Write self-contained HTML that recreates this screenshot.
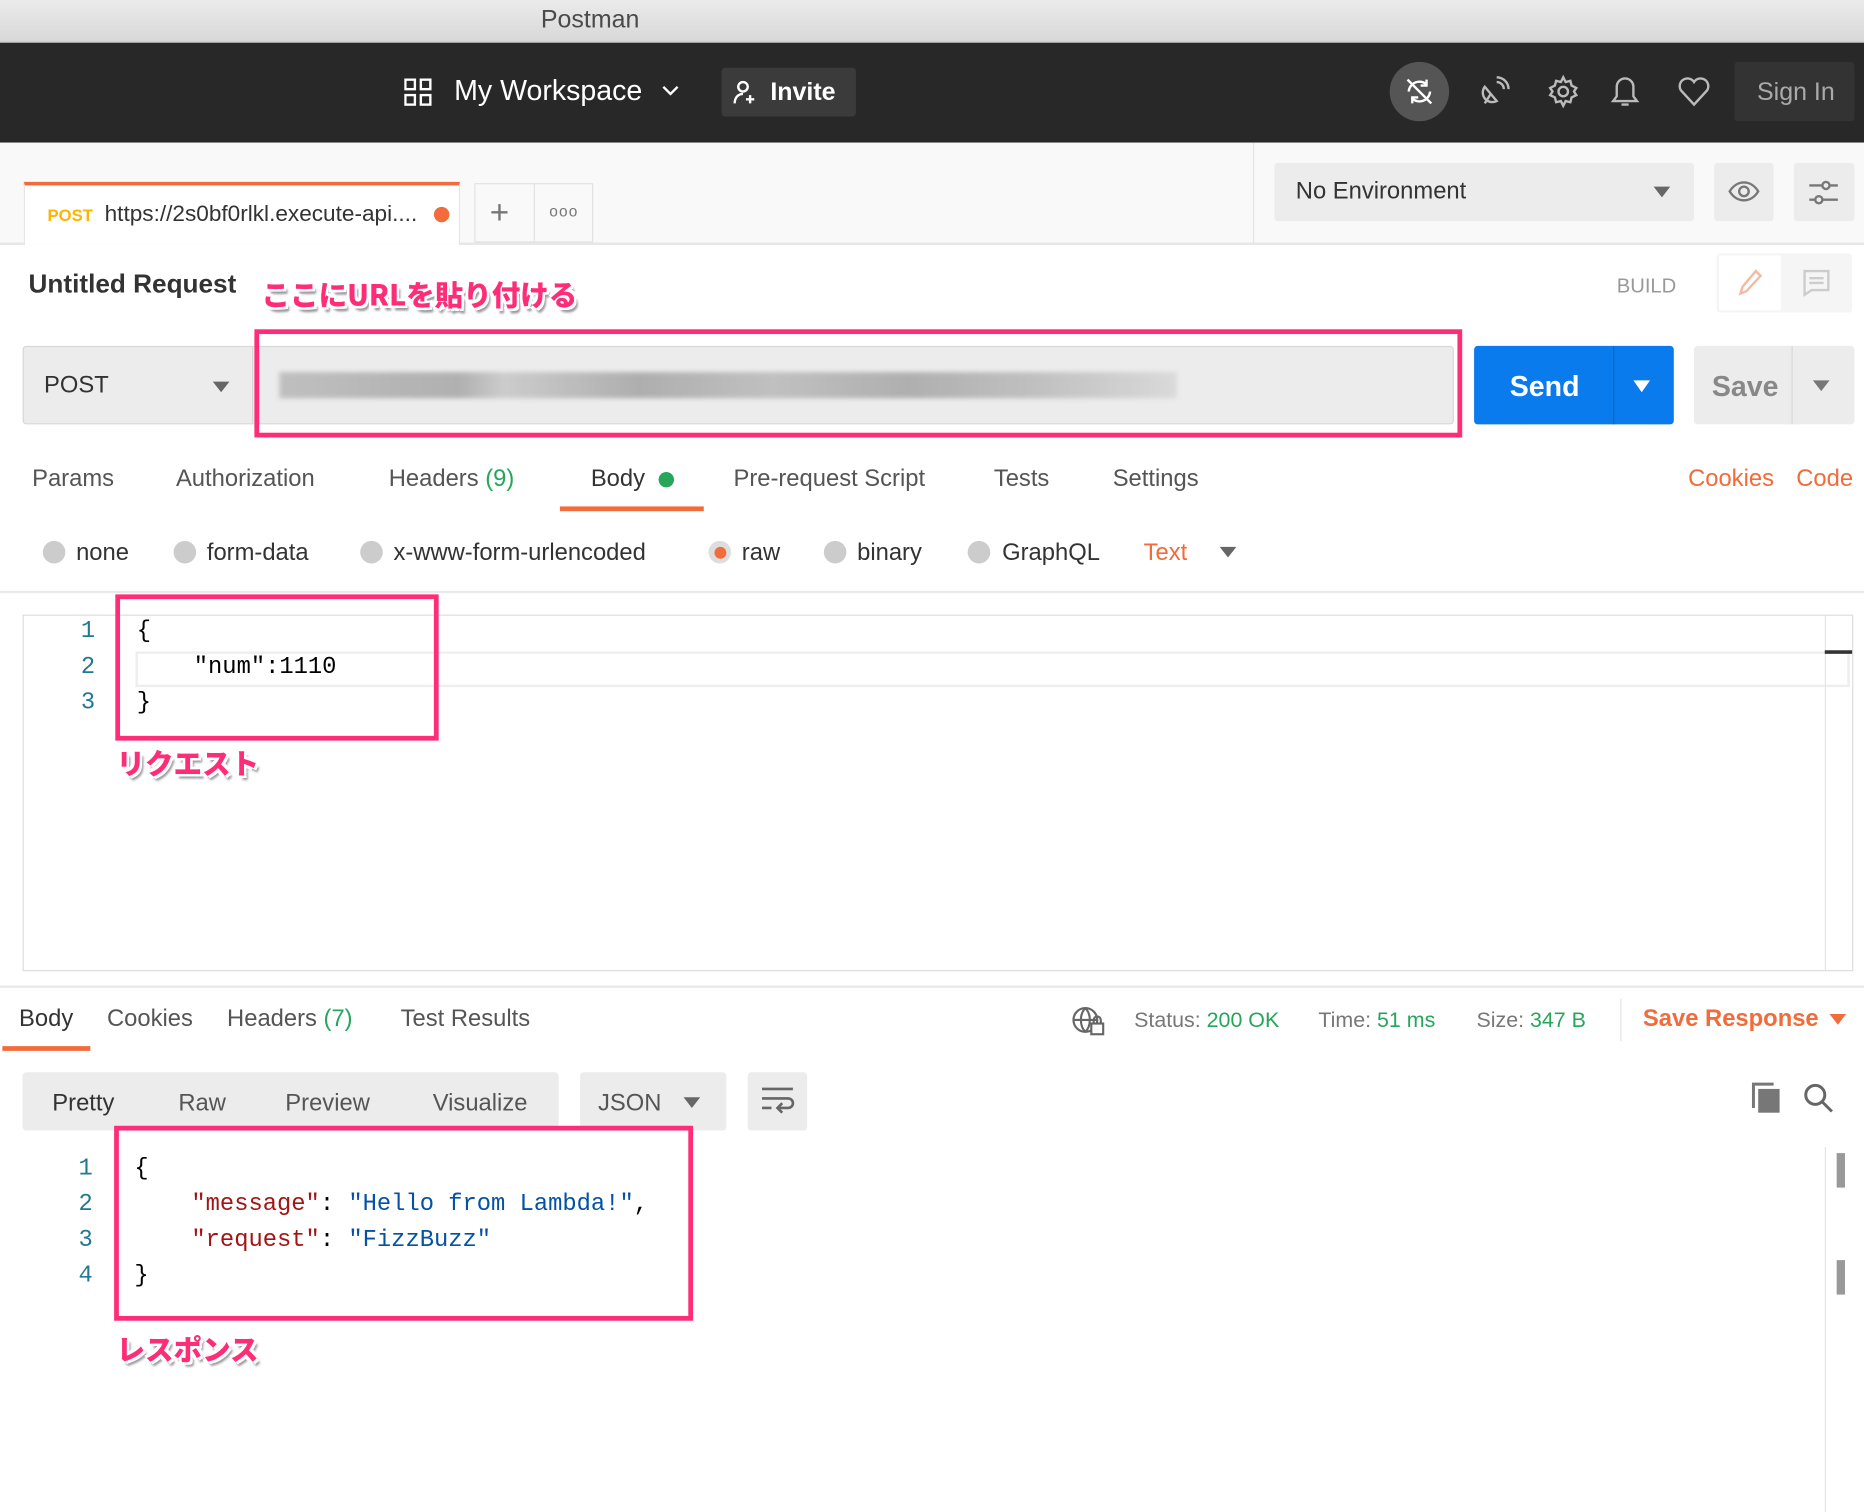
<!DOCTYPE html>
<html><head><meta charset="utf-8">
<style>
html,body{margin:0;padding:0;width:1864px;height:1512px;overflow:hidden;background:#fff}
#w{position:absolute;left:0;top:0;width:1568px;height:1272px;transform:scale(1.18878);transform-origin:0 0;font-family:"Liberation Sans","Noto Sans CJK JP",sans-serif;color:#555;background:#fff}
.a{position:absolute;white-space:nowrap}
.t{font-size:20px;line-height:24px}
.mono{font-family:"Liberation Mono","DejaVu Sans Mono",monospace;font-size:20px;line-height:24px}
.ann{font-family:"Noto Sans CJK JP",sans-serif;font-weight:900;color:#ff2d78;font-size:24px;text-shadow:2px 2px 0 #fff,-2px -2px 0 #fff,2px -2px 0 #fff,-2px 2px 0 #fff,3px 4px 2px #999}
.pk{position:absolute;border:4px solid #ff2d78;box-sizing:border-box}
.rad{position:absolute;width:19px;height:19px;border-radius:50%;background:#ccc}
.ln{color:#237893}
</style></head><body><div id="w">
<!-- title bar -->
<div class="a" style="left:0;top:0;width:1568px;height:35px;background:linear-gradient(#ebebeb,#d8d8d8);border-bottom:1px solid #b8b8b8"></div>
<div class="a" style="left:455px;top:5px;font-size:21px;color:#4a4a4a">Postman</div>
<!-- dark header -->
<div class="a" style="left:0;top:36px;width:1568px;height:84px;background:#282828"></div>
<svg class="a" style="left:340px;top:66px" width="24" height="24" viewBox="0 0 24 24" fill="none" stroke="#fff" stroke-width="2"><rect x="1" y="1" width="8" height="8"/><rect x="14" y="1" width="8" height="8"/><rect x="1" y="14" width="8" height="8"/><rect x="14" y="14" width="8" height="8"/></svg>
<div class="a" style="left:382px;top:63px;font-size:24px;color:#fff">My Workspace</div>
<svg class="a" style="left:556px;top:70px" width="16" height="12" viewBox="0 0 16 12"><path d="M2 3l6 6 6-6" stroke="#fff" stroke-width="2" fill="none"/></svg>
<div class="a" style="left:607px;top:57px;width:113px;height:41px;background:#3b3b3b;border-radius:3px"></div>
<svg class="a" style="left:617px;top:67px" width="20" height="22" viewBox="0 0 20 22" fill="none" stroke="#fff" stroke-width="2"><circle cx="8" cy="6" r="4"/><path d="M1 20c0-5 3-8 7-8"/><path d="M14 13v7M10.5 16.5h7"/></svg>
<div class="a" style="left:648px;top:66px;font-size:21px;font-weight:bold;color:#fff">Invite</div>
<div class="a" style="left:1169px;top:52px;width:50px;height:50px;border-radius:50%;background:#555"></div>
<svg class="a" style="left:1180px;top:63px" width="28" height="28" viewBox="0 0 28 28" fill="none" stroke="#fff" stroke-width="2"><path d="M5 14a9 9 0 0 1 15-6M23 14a9 9 0 0 1-15 6M20 4v5h-5M8 24v-5h5M4 4l20 20"/></svg>
<svg class="a" style="left:1243px;top:63px" width="28" height="28" viewBox="0 0 28 28" fill="none" stroke="#bbb" stroke-width="2"><path d="M6 10a8 8 0 0 0 10 12zM11 16l-5 8M16 6a6 6 0 0 1 6 6M16 2a10 10 0 0 1 10 10"/></svg>
<svg class="a" style="left:1301px;top:63px" width="28" height="28" viewBox="0 0 28 28" fill="none" stroke="#bbb" stroke-width="2"><circle cx="14" cy="14" r="4"/><path d="M14 2l2 4 4-1 1 4 4 2-2 3 2 3-4 2-1 4-4-1-2 4-2-4-4 1-1-4-4-2 2-3-2-3 4-2 1-4 4 1z"/></svg>
<svg class="a" style="left:1354px;top:63px" width="26" height="28" viewBox="0 0 26 28" fill="none" stroke="#bbb" stroke-width="2"><path d="M13 3a7 7 0 0 0-7 7v8l-3 4h20l-3-4v-8a7 7 0 0 0-7-7zM10 25h6"/></svg>
<svg class="a" style="left:1411px;top:64px" width="28" height="26" viewBox="0 0 28 26" fill="none" stroke="#bbb" stroke-width="2"><path d="M14 24L3 12A6 6 0 0 1 14 5a6 6 0 0 1 11 7z"/></svg>
<div class="a" style="left:1459px;top:52px;width:101px;height:50px;background:#333;border-radius:3px"></div>
<div class="a" style="left:1478px;top:66px;font-size:21px;color:#aaa">Sign In</div>
<!-- tabs bar -->
<div class="a" style="left:0;top:120px;width:1568px;height:84px;background:#f9f9f9;border-bottom:2px solid #e6e6e6"></div>
<div class="a" style="left:20px;top:153px;width:367px;height:53px;background:#fff;border-top:3px solid #f26b3a;box-sizing:border-box;border-left:1px solid #e6e6e6;border-right:1px solid #e6e6e6"></div>
<div class="a" style="left:40px;top:173px;font-size:14px;font-weight:bold;color:#ffb400">POST</div>
<div class="a" style="left:88px;top:170px;font-size:19px;color:#333">https://2s0bf0rlkl.execute-api....</div>
<div class="a" style="left:365px;top:174px;width:13px;height:13px;border-radius:50%;background:#f26b3a"></div>
<div class="a" style="left:399px;top:154px;width:100px;height:50px;border:1px solid #e3e3e3;box-sizing:border-box;background:#f9f9f9"></div>
<div class="a" style="left:449px;top:154px;width:1px;height:50px;background:#e3e3e3"></div>
<div class="a" style="left:412px;top:163px;font-size:28px;color:#777;font-weight:300">+</div>
<div class="a" style="left:462px;top:170px;font-size:13px;color:#777;letter-spacing:1px">ooo</div>
<div class="a" style="left:1054px;top:120px;width:1px;height:84px;background:#e3e3e3"></div>
<div class="a" style="left:1072px;top:137px;width:353px;height:49px;background:#ececec;border-radius:3px"></div>
<div class="a" style="left:1090px;top:150px;font-size:20px;color:#333">No Environment</div>
<div class="a" style="left:1391px;top:157px;border:7px solid transparent;border-top:9px solid #666"></div>
<div class="a" style="left:1442px;top:137px;width:50px;height:49px;background:#ececec;border-radius:3px"></div>
<svg class="a" style="left:1453px;top:150px" width="28" height="22" viewBox="0 0 28 22" fill="none" stroke="#777" stroke-width="2"><path d="M2 11c6-10 18-10 24 0c-6 10-18 10-24 0z"/><circle cx="14" cy="11" r="4"/></svg>
<div class="a" style="left:1509px;top:137px;width:51px;height:49px;background:#ececec;border-radius:3px"></div>
<svg class="a" style="left:1520px;top:148px" width="28" height="28" viewBox="0 0 28 28" fill="none" stroke="#777" stroke-width="2"><path d="M2 8h24M2 20h24"/><circle cx="16" cy="8" r="3" fill="#ececec"/><circle cx="10" cy="20" r="3" fill="#ececec"/></svg>
<!-- request title -->
<div class="a" style="left:24px;top:226px;font-size:22px;color:#333;font-weight:bold">Untitled Request</div>
<div class="a ann" style="left:220px;top:229px">ここにURLを貼り付ける</div>
<div class="a" style="left:1360px;top:231px;font-size:17px;color:#999">BUILD</div>
<div class="a" style="left:1444px;top:213px;width:114px;height:50px;background:#f5f5f5;border-radius:3px"></div>
<div class="a" style="left:1446px;top:215px;width:52px;height:46px;background:#fff"></div>
<svg class="a" style="left:1460px;top:225px" width="24" height="26" viewBox="0 0 24 26" fill="none" stroke="#f6b9a0" stroke-width="2"><path d="M4 22l2-6L17 3l4 4L9 20z"/></svg>
<svg class="a" style="left:1516px;top:226px" width="24" height="24" viewBox="0 0 24 24" fill="none" stroke="#ccc" stroke-width="2"><path d="M2 2h20v16H8l-6 4z M6 8h12M6 12h12"/></svg>
<!-- url bar -->
<div class="a" style="left:19px;top:291px;width:1204px;height:66px;background:#ececec;border:1px solid #d8d8d8;box-sizing:border-box;border-radius:3px"></div>
<div class="a" style="left:37px;top:313px;font-size:20px;color:#333">POST</div>
<div class="a" style="left:179px;top:321px;border:7px solid transparent;border-top:9px solid #666"></div>
<div class="a" style="left:212px;top:292px;width:1px;height:64px;background:#d8d8d8"></div>
<div class="a" style="left:235px;top:313px;width:755px;height:22px;background:linear-gradient(90deg,#bbb,#aaa 20%,#c9c9c9 25%,#a8a8a8 40%,#bcbcbc 55%,#a9a9a9 70%,#bdbdbd 85%,#d8d8d8);filter:blur(2px);opacity:.9"></div>
<div class="pk" style="left:214px;top:277px;width:1016px;height:91px"></div>
<div class="a" style="left:1240px;top:291px;width:168px;height:66px;background:#097bed;border-radius:3px"></div>
<div class="a" style="left:1357px;top:291px;width:1px;height:66px;background:#0a66c4"></div>
<div class="a" style="left:1270px;top:312px;font-size:24px;font-weight:bold;color:#fff">Send</div>
<div class="a" style="left:1374px;top:320px;border:7px solid transparent;border-top:10px solid #fff"></div>
<div class="a" style="left:1425px;top:291px;width:135px;height:66px;background:#ececec;border-radius:3px"></div>
<div class="a" style="left:1507px;top:291px;width:1px;height:66px;background:#d8d8d8"></div>
<div class="a" style="left:1440px;top:312px;font-size:24px;font-weight:bold;color:#888">Save</div>
<div class="a" style="left:1525px;top:320px;border:7px solid transparent;border-top:9px solid #777"></div>
<!-- req tabs -->
<div class="a t" style="left:27px;top:391px">Params</div>
<div class="a t" style="left:148px;top:391px">Authorization</div>
<div class="a t" style="left:327px;top:391px">Headers <span style="color:#26a65b">(9)</span></div>
<div class="a t" style="left:497px;top:391px;color:#333">Body</div>
<div class="a" style="left:554px;top:397px;width:13px;height:13px;border-radius:50%;background:#26a65b"></div>
<div class="a" style="left:471px;top:426px;width:121px;height:4px;background:#f26b3a"></div>
<div class="a t" style="left:617px;top:391px">Pre-request Script</div>
<div class="a t" style="left:836px;top:391px">Tests</div>
<div class="a t" style="left:936px;top:391px">Settings</div>
<div class="a t" style="left:1420px;top:391px;color:#f26b3a">Cookies</div>
<div class="a t" style="left:1511px;top:391px;color:#f26b3a">Code</div>
<!-- radios -->
<div class="rad" style="left:36px;top:455px"></div><div class="a t" style="left:64px;top:453px;color:#333">none</div>
<div class="rad" style="left:146px;top:455px"></div><div class="a t" style="left:174px;top:453px;color:#333">form-data</div>
<div class="rad" style="left:303px;top:455px"></div><div class="a t" style="left:331px;top:453px;color:#333">x-www-form-urlencoded</div>
<div class="rad" style="left:596px;top:455px;background:#ddd"></div><div class="a" style="left:601px;top:460px;width:10px;height:10px;border-radius:50%;background:#f26b3a"></div><div class="a t" style="left:624px;top:453px;color:#333">raw</div>
<div class="rad" style="left:693px;top:455px"></div><div class="a t" style="left:721px;top:453px;color:#333">binary</div>
<div class="rad" style="left:814px;top:455px"></div><div class="a t" style="left:843px;top:453px;color:#333">GraphQL</div>
<div class="a t" style="left:962px;top:453px;color:#f26b3a">Text</div>
<div class="a" style="left:1026px;top:460px;border:7px solid transparent;border-top:9px solid #666"></div>
<div class="a" style="left:0;top:497px;width:1568px;height:2px;background:#eaeaea"></div>
<!-- editor -->
<div class="a" style="left:19px;top:517px;width:1540px;height:300px;border:1px solid #ddd;box-sizing:border-box"></div>
<div class="a" style="left:114px;top:548px;width:1442px;height:30px;border:2px solid #eee;box-sizing:border-box"></div>
<div class="a" style="left:1535px;top:518px;width:1px;height:298px;background:#e5e5e5"></div>
<div class="a" style="left:1535px;top:547px;width:23px;height:3px;background:#333"></div>
<div class="a mono ln" style="left:68px;top:520px">1</div>
<div class="a mono ln" style="left:68px;top:550px">2</div>
<div class="a mono ln" style="left:68px;top:580px">3</div>
<div class="a mono" style="left:115px;top:520px;color:#000">{</div>
<div class="a mono" style="left:163px;top:550px;color:#000">"num":1110</div>
<div class="a mono" style="left:115px;top:580px;color:#000">}</div>
<div class="pk" style="left:97px;top:500px;width:272px;height:123px"></div>
<div class="a ann" style="left:98px;top:623px">リクエスト</div>
<!-- response -->
<div class="a" style="left:0;top:829px;width:1568px;height:2px;background:#eaeaea"></div>
<div class="a t" style="left:16px;top:845px;color:#333">Body</div>
<div class="a" style="left:2px;top:880px;width:74px;height:4px;background:#f26b3a"></div>
<div class="a t" style="left:90px;top:845px">Cookies</div>
<div class="a t" style="left:191px;top:845px">Headers <span style="color:#26a65b">(7)</span></div>
<div class="a t" style="left:337px;top:845px">Test Results</div>
<svg class="a" style="left:901px;top:845px" width="30" height="28" viewBox="0 0 30 28" fill="none" stroke="#666" stroke-width="1.8"><circle cx="12" cy="13" r="10"/><path d="M2 13h20M12 3c-5 5-5 15 0 20M12 3c5 5 5 15 0 20"/><rect x="17" y="16" width="10" height="9" fill="#fff"/><path d="M19 16v-3a3 3 0 0 1 6 0v3"/></svg>
<div class="a" style="left:954px;top:847px;font-size:18px;line-height:22px;color:#777">Status: <span style="color:#26a65b">200 OK</span></div>
<div class="a" style="left:1109px;top:847px;font-size:18px;line-height:22px;color:#777">Time: <span style="color:#26a65b">51 ms</span></div>
<div class="a" style="left:1242px;top:847px;font-size:18px;line-height:22px;color:#777">Size: <span style="color:#26a65b">347 B</span></div>
<div class="a" style="left:1363px;top:840px;width:1px;height:36px;background:#e3e3e3"></div>
<div class="a t" style="left:1382px;top:845px;color:#f26b3a;font-weight:bold">Save Response</div>
<div class="a" style="left:1539px;top:853px;border:7px solid transparent;border-top:9px solid #f26b3a"></div>
<div class="a" style="left:19px;top:902px;width:451px;height:49px;background:#ececec;border-radius:3px"></div>
<div class="a t" style="left:44px;top:916px;color:#333">Pretty</div>
<div class="a t" style="left:150px;top:916px">Raw</div>
<div class="a t" style="left:240px;top:916px">Preview</div>
<div class="a t" style="left:364px;top:916px">Visualize</div>
<div class="a" style="left:488px;top:902px;width:123px;height:49px;background:#ececec;border-radius:3px"></div>
<div class="a t" style="left:503px;top:916px">JSON</div>
<div class="a" style="left:575px;top:923px;border:7px solid transparent;border-top:9px solid #666"></div>
<div class="a" style="left:629px;top:902px;width:50px;height:49px;background:#ececec;border-radius:3px"></div>
<svg class="a" style="left:639px;top:912px" width="30" height="28" viewBox="0 0 30 28" fill="none" stroke="#666" stroke-width="2.2"><path d="M2 4h26M2 12h22a4 4 0 0 1 0 8h-8M2 20h8"/><path d="M19 16l-4 4 4 4"/></svg>
<svg class="a" style="left:1473px;top:910px" width="26" height="28" viewBox="0 0 26 28"><rect x="6" y="6" width="18" height="20" fill="#777"/><path d="M2 22V2h17" stroke="#777" stroke-width="2.5" fill="none"/></svg>
<svg class="a" style="left:1516px;top:910px" width="28" height="28" viewBox="0 0 28 28" fill="none" stroke="#666" stroke-width="2.5"><circle cx="11" cy="11" r="8"/><path d="M17 17l8 8"/></svg>
<div class="a mono ln" style="left:66px;top:972px">1</div>
<div class="a mono ln" style="left:66px;top:1002px">2</div>
<div class="a mono ln" style="left:66px;top:1032px">3</div>
<div class="a mono ln" style="left:66px;top:1062px">4</div>
<div class="a mono" style="left:113px;top:972px;color:#000">{</div>
<div class="a mono" style="left:161px;top:1002px;color:#000"><span style="color:#a31515">"message"</span>: <span style="color:#0451a5">"Hello from Lambda!"</span>,</div>
<div class="a mono" style="left:161px;top:1032px;color:#000"><span style="color:#a31515">"request"</span>: <span style="color:#0451a5">"FizzBuzz"</span></div>
<div class="a mono" style="left:113px;top:1062px;color:#000">}</div>
<div class="pk" style="left:96px;top:947px;width:487px;height:164px"></div>
<div class="a ann" style="left:98px;top:1116px">レスポンス</div>
<div class="a" style="left:1535px;top:965px;width:1px;height:307px;background:#e5e5e5"></div>
<div class="a" style="left:1545px;top:970px;width:7px;height:29px;background:#999"></div>
<div class="a" style="left:1545px;top:1060px;width:7px;height:29px;background:#999"></div>
</div></body></html>
